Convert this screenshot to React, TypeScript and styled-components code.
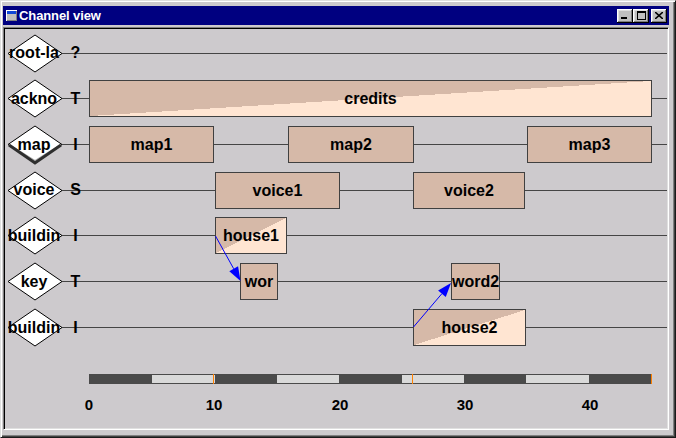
import React from "react";
import styled, { createGlobalStyle } from "styled-components";

const UNIT = 12.525;
const px = (u: number) => Math.round(u * UNIT);

const FACE = "#cdcacd";
const TAN = "#d6b9a8";
const PEACH = "#ffe5d2";
const INK = "#454545";

const GlobalStyle = createGlobalStyle`
  html, body { margin: 0; padding: 0; background: ${FACE}; }
  body { font-family: "Liberation Sans", Arial, Helvetica, sans-serif; }
  * { box-sizing: border-box; }
`;

const Window = styled.div`
  width: 676px;
  height: 438px;
  display: flex;
  flex-direction: column;
  background: ${FACE};
  border: 1px solid;
  border-color: #dfdfdf #1a1a1a #1a1a1a #dfdfdf;
  box-shadow: inset 1px 1px 0 #fff, inset -1px -1px 0 #404040, inset -2px -2px 0 #808080;
  padding: 5px 6px 7px 2px;
`;

const TitleBar = styled.div`
  height: 19px;
  flex: none;
  background: #000080;
  display: flex;
  align-items: center;
  gap: 2px;
  padding: 0 2px 0 3px;
`;

const TitleText = styled.span`
  flex: 1;
  color: #fff;
  font-weight: bold;
  font-size: 13px;
  line-height: 19px;
  letter-spacing: -0.1px;
  white-space: nowrap;
`;

const TitleButtons = styled.div`
  display: flex;
  align-items: center;
`;

const TitleButton = styled.div<{ $gap?: number }>`
  width: 16px;
  height: 14px;
  margin-left: ${(p) => p.$gap ?? 0}px;
  background: #c0c0c0;
  box-shadow: inset -1px -1px 0 #000, inset 1px 1px 0 #fff, inset -2px -2px 0 #808080,
    inset 2px 2px 0 #dfdfdf;
  display: flex;
  align-items: center;
  justify-content: center;
  svg { display: block; }
`;

const Client = styled.div`
  flex: 1;
  margin-top: 2px;
  border: 1px solid;
  border-color: #808080 #fff #fff #808080;
  box-shadow: inset 1px 1px 0 #000, inset -1px -1px 0 #dfdfdf;
  padding: 1px;
  display: flex;
  flex-direction: column;
  background: ${FACE};
`;

const Rows = styled.div`
  position: relative;
  padding: 1px 0 0 1px;
  display: flex;
  flex-direction: column;
`;

const Row = styled.div<{ $h: number }>`
  height: ${(p) => p.$h}px;
  display: flex;
`;

const DiamondCell = styled.div`
  position: relative;
  width: 56px;
  flex: none;
  display: flex;
  align-items: center;
  justify-content: center;
  svg {
    position: absolute;
    left: 0;
    top: 0;
    overflow: visible;
  }
`;

const DiamondLabel = styled.span`
  position: relative;
  font-weight: bold;
  font-size: 16px;
  color: #000;
  white-space: nowrap;
  padding-top: 1px;
`;

const Lane = styled.div`
  flex: 1;
  display: flex;
  background: linear-gradient(${INK}, ${INK}) 0 23px / 100% 1px no-repeat;
`;

const Kind = styled.div`
  width: 27px;
  flex: none;
  display: flex;
  align-items: center;
  justify-content: center;
  font-weight: bold;
  font-size: 16px;
  color: #000;
  padding-top: 1px;
`;

const Track = styled.div`
  flex: 1;
  position: relative;
`;

const Block = styled.div<{ $split: boolean; $endMark?: boolean }>`
  position: absolute;
  top: 5px;
  height: 37px;
  border: 1px solid #404040;
  background: ${(p) =>
    p.$split ? `linear-gradient(to bottom right, ${TAN} 50%, ${PEACH} 50%)` : TAN};
  display: flex;
  align-items: center;
  justify-content: center;
  overflow: hidden;
  white-space: nowrap;
  font-weight: bold;
  font-size: 16px;
  color: #000;
  ${(p) =>
    p.$endMark
      ? `
    &::before, &::after {
      content: "";
      position: absolute;
      right: -1px;
      width: 7px;
      height: 1px;
      background: #ff8000;
    }
    &::before { top: -1px; }
    &::after { bottom: -1px; }
  `
      : ""}
`;

const Overlay = styled.svg`
  position: absolute;
  left: 0;
  top: 0;
  width: 100%;
  height: 100%;
  pointer-events: none;
  overflow: visible;
`;

const Scale = styled.div`
  padding-left: 84px;
  margin-top: 24px;
`;

const ScaleBar = styled.div`
  position: relative;
  width: 563px;
  height: 10px;
  display: flex;
  border: 1px solid #4a4a4a;
  background: #4a4a4a;
`;

const Segment = styled.div<{ $light: boolean }>`
  flex: 1;
  background: ${(p) => (p.$light ? "#d9d9d9" : "#4a4a4a")};
`;

const Tick = styled.div`
  position: absolute;
  top: -1px;
  bottom: -1px;
  width: 1px;
  background: #ff8000;
`;

const Axis = styled.div`
  position: relative;
  width: 563px;
  height: 17px;
  margin-top: 12px;
`;

const AxisLabel = styled.span`
  position: absolute;
  top: 0;
  transform: translateX(-50%);
  font-weight: bold;
  font-size: 15px;
  line-height: 17px;
  color: #000;
`;

type Bar = { label: string; start: number; end: number; split?: boolean; endMark?: boolean };
type Channel = { name: string; kind: string; height: number; selected?: boolean; bars: Bar[] };

const channels: Channel[] = [
  { name: "root-la", kind: "?", height: 45, bars: [] },
  {
    name: "ackno",
    kind: "T",
    height: 46,
    bars: [{ label: "credits", start: 0, end: 44.95, split: true }],
  },
  {
    name: "map",
    kind: "I",
    height: 46,
    selected: true,
    bars: [
      { label: "map1", start: 0, end: 10 },
      { label: "map2", start: 15.9, end: 25.95 },
      { label: "map3", start: 35, end: 44.95, endMark: true },
    ],
  },
  {
    name: "voice",
    kind: "S",
    height: 45,
    bars: [
      { label: "voice1", start: 10.05, end: 20.05 },
      { label: "voice2", start: 25.85, end: 34.8 },
    ],
  },
  {
    name: "buildin",
    kind: "I",
    height: 46,
    bars: [{ label: "house1", start: 10.05, end: 15.8, split: true }],
  },
  {
    name: "key",
    kind: "T",
    height: 46,
    bars: [
      { label: "wor", start: 12.05, end: 15.05 },
      { label: "word2", start: 28.9, end: 32.85 },
    ],
  },
  {
    name: "buildin",
    kind: "I",
    height: 46,
    bars: [{ label: "house2", start: 25.85, end: 34.9, split: true }],
  },
];

const links = [
  { x1: 210.5, y1: 207, x2: 235.5, y2: 252 },
  { x1: 408.5, y1: 298, x2: 446, y2: 254 },
];

const ticks = [9.93, 25.8, 44.9];
const axis = [0, 10, 20, 30, 40];

function Diamond({ selected }: { selected?: boolean }) {
  return (
    <svg width="56" height="46" viewBox="0 0 56 46">
      <polygon
        points="2,23.5 29,5 56,23.5 29,42"
        fill="#fff"
        stroke="#000"
        strokeWidth="1"
      />
      {selected && (
        <>
          <polyline points="5,25 29,40 53,25" fill="none" stroke="#a8a8a8" strokeWidth="2" />
          <polyline points="3,24 29,42 55,24" fill="none" stroke="#2e2e2e" strokeWidth="3" />
        </>
      )}
    </svg>
  );
}

function Arrow({ x1, y1, x2, y2 }: { x1: number; y1: number; x2: number; y2: number }) {
  const dx = x2 - x1;
  const dy = y2 - y1;
  const len = Math.hypot(dx, dy);
  const ux = dx / len;
  const uy = dy / len;
  const hl = 14;
  const hw = 5;
  const bx = x2 - ux * hl;
  const by = y2 - uy * hl;
  const pts = `${x2},${y2} ${bx - uy * hw},${by + ux * hw} ${bx + uy * hw},${by - ux * hw}`;
  return (
    <g>
      <line x1={x1} y1={y1} x2={bx} y2={by} stroke="#0000ff" strokeWidth="1" />
      <polygon points={pts} fill="#0000ff" />
    </g>
  );
}

export default function App() {
  return (
    <>
      <GlobalStyle />
      <Window>
        <TitleBar>
          <svg width="11" height="11" viewBox="0 0 11 11">
            <rect x="0" y="0" width="11" height="11" fill="#fff" />
            <rect x="1" y="1" width="10" height="10" fill="#808080" />
            <rect x="1" y="1" width="9" height="9" fill="#c0c0c0" />
            <rect x="1" y="1" width="9" height="3" fill="#1048d8" />
          </svg>
          <TitleText>Channel view</TitleText>
          <TitleButtons>
            <TitleButton>
              <svg width="8" height="7" viewBox="0 0 8 7">
                <rect x="0" y="5" width="6" height="2" fill="#000" />
              </svg>
            </TitleButton>
            <TitleButton>
              <svg width="9" height="9" viewBox="0 0 9 9">
                <rect x="0.5" y="0.5" width="8" height="8" fill="none" stroke="#000" />
                <rect x="0" y="0" width="9" height="2" fill="#000" />
              </svg>
            </TitleButton>
            <TitleButton $gap={2}>
              <svg width="8" height="7" viewBox="0 0 8 7">
                <path d="M0 0 L8 7 M8 0 L0 7" stroke="#000" strokeWidth="1.6" />
              </svg>
            </TitleButton>
          </TitleButtons>
        </TitleBar>
        <Client>
          <Rows>
            {channels.map((ch, i) => (
              <Row key={i} $h={ch.height}>
                <DiamondCell>
                  <Diamond selected={ch.selected} />
                  <DiamondLabel>{ch.name}</DiamondLabel>
                </DiamondCell>
                <Lane>
                  <Kind>{ch.kind}</Kind>
                  <Track>
                    {ch.bars.map((b) => (
                      <Block
                        key={b.label}
                        $split={!!b.split}
                        $endMark={b.endMark}
                        style={{ left: px(b.start), width: px(b.end) - px(b.start) }}
                      >
                        {b.label}
                      </Block>
                    ))}
                  </Track>
                </Lane>
              </Row>
            ))}
            <Overlay>
              {links.map((l, i) => (
                <Arrow key={i} {...l} />
              ))}
            </Overlay>
          </Rows>
          <Scale>
            <ScaleBar>
              {Array.from({ length: 9 }).map((_, i) => (
                <Segment key={i} $light={i % 2 === 1} />
              ))}
              {ticks.map((t) => (
                <Tick key={t} style={{ left: px(t) - 1 }} />
              ))}
            </ScaleBar>
            <Axis>
              {axis.map((v) => (
                <AxisLabel key={v} style={{ left: px(v) }}>
                  {v}
                </AxisLabel>
              ))}
            </Axis>
          </Scale>
        </Client>
      </Window>
    </>
  );
}
